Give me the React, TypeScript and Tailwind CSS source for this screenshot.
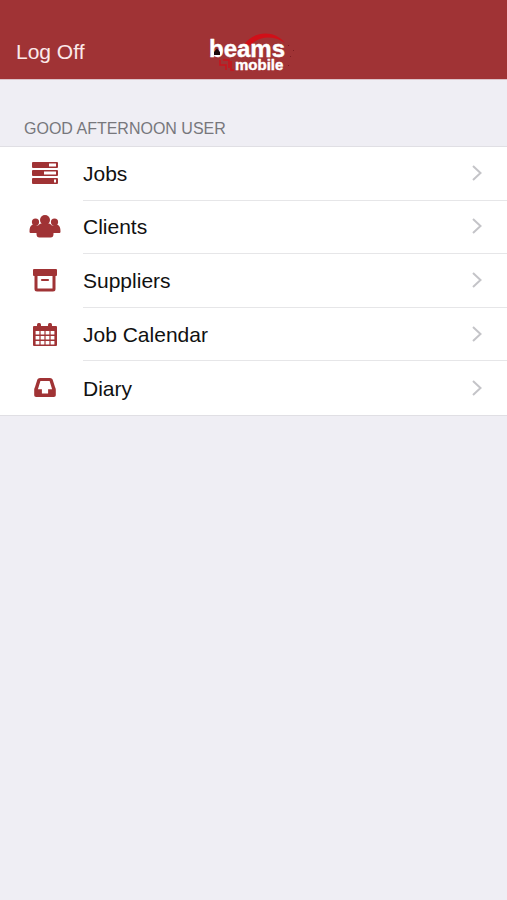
import type { ReactNode } from "react";

type MenuItem = {
  label: string;
  href: string;
  icon: ReactNode;
};

const JobsIcon = () => (
  <svg viewBox="0 0 26 24" className="w-[26px] h-6" aria-hidden="true">
    <rect x="0" y="0" width="26" height="6" rx="1" fill="#a03335" />
    <rect x="17" y="1.500" width="7" height="3" fill="#fff" />
    <rect x="0" y="8" width="26" height="6" rx="1" fill="#a03335" />
    <rect x="12" y="9.500" width="12" height="3" fill="#fff" />
    <rect x="0" y="16" width="26" height="6" rx="1" fill="#a03335" />
    <rect x="22" y="17.500" width="2" height="3" fill="#fff" />
  </svg>
);

const ClientsIcon = () => (
  <svg viewBox="0 0 32 24" className="w-8 h-6" fill="#a03335" aria-hidden="true">
    <circle cx="6.5" cy="7" r="3.6" />
    <circle cx="25.5" cy="7" r="3.6" />
    <path d="M4 9.500C1.200 10.500 .5 13 .5 16.500c0 1 .5 1.500 1.500 1.500h28c1 0 1.500-.5 1.500-1.500 0-3.500-.7-6-3.500-7l-5 1H9z" />
    <circle cx="16" cy="5" r="5" />
    <path d="M12 8.500c-3.500 1.200-4.500 5-4.500 10.500 0 2.500 1 3.500 3 3.500h11c2 0 3-1 3-3.500 0-5.500-1-9.300-4.500-10.500z" />
  </svg>
);

const SuppliersIcon = () => (
  <svg viewBox="0 0 26 24" className="w-[26px] h-6" aria-hidden="true">
    <rect x="1" y="0" width="24" height="7" rx="1" fill="#a03335" />
    <path d="M4 7v13c0 .6.400 1 1 1h16c.600 0 1-.4 1-1V7" fill="none" stroke="#a03335" strokeWidth="3" />
    <path d="M10 11h6" stroke="#a03335" strokeWidth="2.200" strokeLinecap="round" />
  </svg>
);

const CalendarIcon = () => (
  <svg viewBox="0 0 26 24" className="w-[26px] h-6" aria-hidden="true">
    <rect x="1" y="3" width="24" height="20" rx="1" fill="#a03335" />
    <rect x="5" y="0" width="4" height="6" rx="1.500" fill="#a03335" />
    <rect x="16" y="0" width="4" height="6" rx="1.500" fill="#a03335" />
    {[8, 13, 18].map((y) =>
      [3, 8, 13, 18].map((x) => (
        <rect key={`${x}-${y}`} x={x + 0.6} y={y} width="3.800" height="3.500" fill="#fff" />
      ))
    )}
  </svg>
);

const DiaryIcon = () => (
  <svg viewBox="0 0 26 24" className="w-[26px] h-6" aria-hidden="true">
    <path
      d="M8 2h10c1.300 0 2.200.7 2.700 1.800L23 11c.6 1 .8 1.800.8 2.800V19c0 1.200-.7 2-2 2H4.200c-1.300 0-2-.8-2-2v-5.200c0-1 .2-1.800.8-2.800l2.300-7.200C5.800 2.700 6.700 2 8 2z"
      fill="#a03335"
    />
    <path d="M8.400 5h9.200l2.500 8.300h-4V17.500h-6.200v-4.200h-4z" fill="#fff" />
  </svg>
);

const menuItems: MenuItem[] = [
  { label: "Jobs", href: "#jobs", icon: <JobsIcon /> },
  { label: "Clients", href: "#clients", icon: <ClientsIcon /> },
  { label: "Suppliers", href: "#suppliers", icon: <SuppliersIcon /> },
  { label: "Job Calendar", href: "#calendar", icon: <CalendarIcon /> },
  { label: "Diary", href: "#diary", icon: <DiaryIcon /> },
];

const Logo = () => (
  <svg viewBox="0 0 90 44" className="w-[90px] h-11" role="img" aria-label="beams mobile">
    <path d="M35 15C44 1 65-1 76 13 64 5 50 6 42 15z" fill="#d10f18" />
    <g fill="none" stroke="#c9131c" strokeWidth="1.500">
      <path d="M11 30v5h6v5M14 30h6v8M22 31v9h3" />
    </g>
    <g fill="#7d1c22">
      <rect x="79" y="15" width="1" height="1" />
      <rect x="84" y="20" width="1" height="1" />
      <rect x="81" y="26" width="1" height="1" />
      <rect x="79" y="35" width="1" height="1" />
    </g>
    <g
      fontFamily="'Liberation Sans', Arial, sans-serif"
      fontWeight="700"
      stroke="#fff"
      strokeWidth=".4"
      strokeLinejoin="round"
      fill="#fff"
    >
      <text x="0" y="27" fontSize="24">beams</text>
      <text x="26" y="40" fontSize="15">mobile</text>
    </g>
    <path d="M5 22l3-3.500 3 3.500v3H5z" fill="#1c0a0b" />
  </svg>
);

export default function App() {
  return (
    <div className="min-h-screen bg-[#efeef4] font-['Liberation_Sans',Arial,sans-serif]">
      {/* Top bar */}
      <header className="grid grid-cols-3 items-center pt-7 pb-1 h-20 bg-[#a03335] border-b border-[#dcc3c8]">
        <button className="justify-self-start pl-4 text-[21px] leading-6 text-[#fbe9ea] cursor-pointer">
          Log Off
        </button>
        <div className="justify-self-center">
          <Logo />
        </div>
      </header>

      <main>
        <h1 className="px-6 pt-10 pb-2 text-base leading-[18px] text-[#77777c]">
          GOOD AFTERNOON USER
        </h1>

        {/* Menu */}
        <nav className="border-y border-[#e0dfe4] bg-white">
          <ul className="grid grid-rows-5 h-[268px]">
            {menuItems.map((item) => (
              <li key={item.label} className="group flex">
                <a href={item.href} className="flex flex-1 items-stretch">
                  <span className="flex w-[83px] items-center pl-[29px]">
                    <span className="flex w-8 justify-center">{item.icon}</span>
                  </span>
                  <span className="flex flex-1 items-center justify-between pt-px pr-6 border-b border-[#e6e6e8] group-last:border-b-0">
                    <span className="text-[21px] leading-6 text-[#111]">{item.label}</span>
                    <svg viewBox="0 0 12 18" className="w-3 h-[18px]" fill="none" aria-hidden="true">
                      <path d="M2 1l7.500 7L2 15" stroke="#c4c4c8" strokeWidth="2" />
                    </svg>
                  </span>
                </a>
              </li>
            ))}
          </ul>
        </nav>
      </main>
    </div>
  );
}
